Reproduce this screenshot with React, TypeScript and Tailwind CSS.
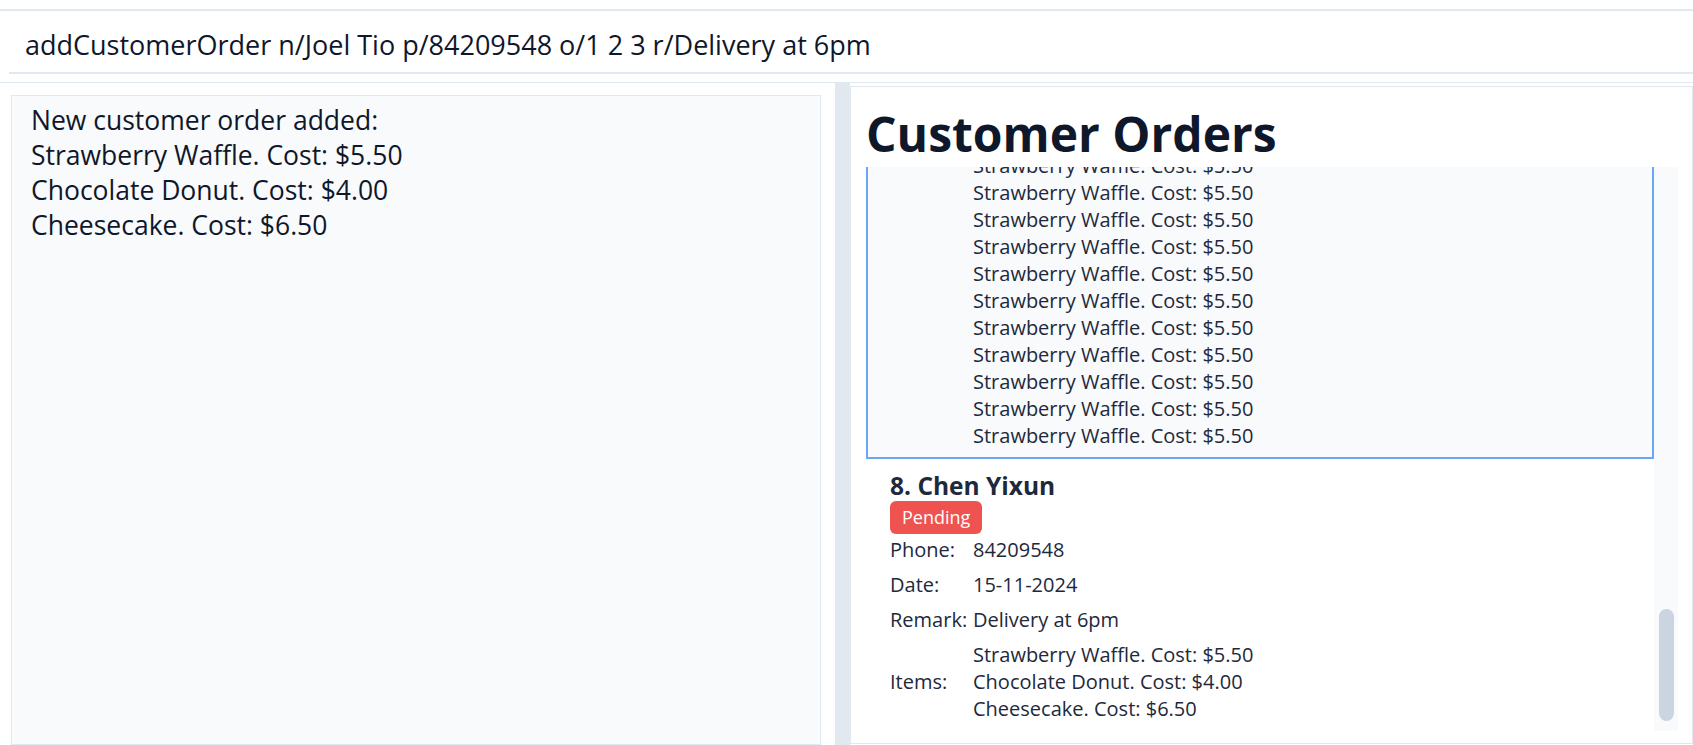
import React from 'react'

const font = { fontFamily: '"Open Sans", "Noto Sans", sans-serif' }

const newOrder = [
  'New customer order added:',
  'Strawberry Waffle. Cost: $5.50',
  'Chocolate Donut. Cost: $4.00',
  'Cheesecake. Cost: $6.50',
]

const bigOrder = Array.from({ length: 30 }, () => 'Strawberry Waffle. Cost: $5.50')

function Row({ label, first, children }: { label: string; first?: boolean; children: React.ReactNode }) {
  return (
    <div className={`flex items-center pb-[4px] ${first ? 'pt-[2px]' : 'pt-[4px]'}`}>
      <div className="w-[83px] shrink-0">{label}</div>
      <div>{children}</div>
    </div>
  )
}

function OrderCard({
  index,
  name,
  phone,
  date,
  remark,
  items,
  selected,
}: {
  index: number
  name: string
  phone: string
  date: string
  remark: string
  items: string[]
  selected?: boolean
}) {
  return (
    <div
      className={`px-[22px] pt-[10px] text-[20px] leading-[27px] text-[#1e293b] ${
        selected ? 'pb-[4px] bg-[#f8fafc] border-2 border-[#6aa8f7]' : 'pb-[3px] bg-white border-2 border-transparent'
      }`}
    >
      <div className="text-[24.5px] leading-[30px] font-bold text-[#1e293b]">
        {index}. {name}
      </div>
      <div className="inline-block rounded-[6px] bg-[#ef5350] px-[12px] py-[3px] text-[18px] leading-[27px] text-white">
        Pending
      </div>
      <Row label="Phone:" first>
        {phone}
      </Row>
      <Row label="Date:">{date}</Row>
      <Row label="Remark:">{remark}</Row>
      <Row label="Items:">
        {items.map((it, i) => (
          <div key={i}>{it}</div>
        ))}
      </Row>
    </div>
  )
}

export default function App() {
  return (
    <div className="h-[745px] w-full overflow-hidden bg-white flex flex-col text-[#0f172a]" style={font}>
      <div className="h-[9px] shrink-0" />
      <div className="border-t-2 border-[#e2e8f0]" />

      {/* Command box */}
      <div className="h-[61px] shrink-0 flex items-center pl-[25px] pt-[7px] text-[27px] text-[#0f172a]">
        addCustomerOrder n/Joel Tio p/84209548 o/1 2 3 r/Delivery at 6pm
      </div>
      <div className="ml-[9px] border-t-2 border-[#e2e8f0]" />
      <div className="h-[8px] shrink-0" />
      <div className="border-t border-[#e2e8f0]" />

      <div className="flex flex-1 min-h-0 pl-[11px]">
        {/* Result display */}
        <div className="w-[810px] shrink-0 pt-[12px]">
          <div className="h-full border border-[#e2e8f0] bg-[#f8fafc] px-[19px] pt-[7px] text-[26.5px] leading-[35px]">
            {newOrder.map((l, i) => (
              <div key={i}>{l}</div>
            ))}
          </div>
        </div>

        <div className="w-[14px] shrink-0" />
        <div className="w-[15px] shrink-0 bg-[#e2e8f0]" />

        {/* Customer orders panel */}
        <div className="flex-1 min-w-0 mt-[3px] mb-[1px] border border-[#e2e8f0] bg-white flex flex-col pl-[15px] pr-[14px]">
          <h1 className="shrink-0 h-[80px] pt-[18px] text-[48px] leading-[58px] font-bold text-[#0f172a]">
            Customer Orders
          </h1>
          <div className="flex min-h-0 flex-1 mb-[12px] bg-[#f8fafc]">
            <div className="flex flex-1 min-w-0 flex-col justify-end overflow-hidden">
              <OrderCard
                index={7}
                name="Joel Tio"
                phone="84209548"
                date="15-11-2024"
                remark="Delivery at 6pm"
                items={bigOrder}
                selected
              />
              <OrderCard
                index={8}
                name="Chen Yixun"
                phone="84209548"
                date="15-11-2024"
                remark="Delivery at 6pm"
                items={['Strawberry Waffle. Cost: $5.50', 'Chocolate Donut. Cost: $4.00', 'Cheesecake. Cost: $6.50']}
              />
            </div>
            <div className="w-[24px] shrink-0 flex flex-col justify-end pb-[10px] items-center">
              <div className="h-[112px] w-[15px] rounded-full bg-[#cbd5e1]" />
            </div>
          </div>
        </div>
      </div>
    </div>
  )
}
